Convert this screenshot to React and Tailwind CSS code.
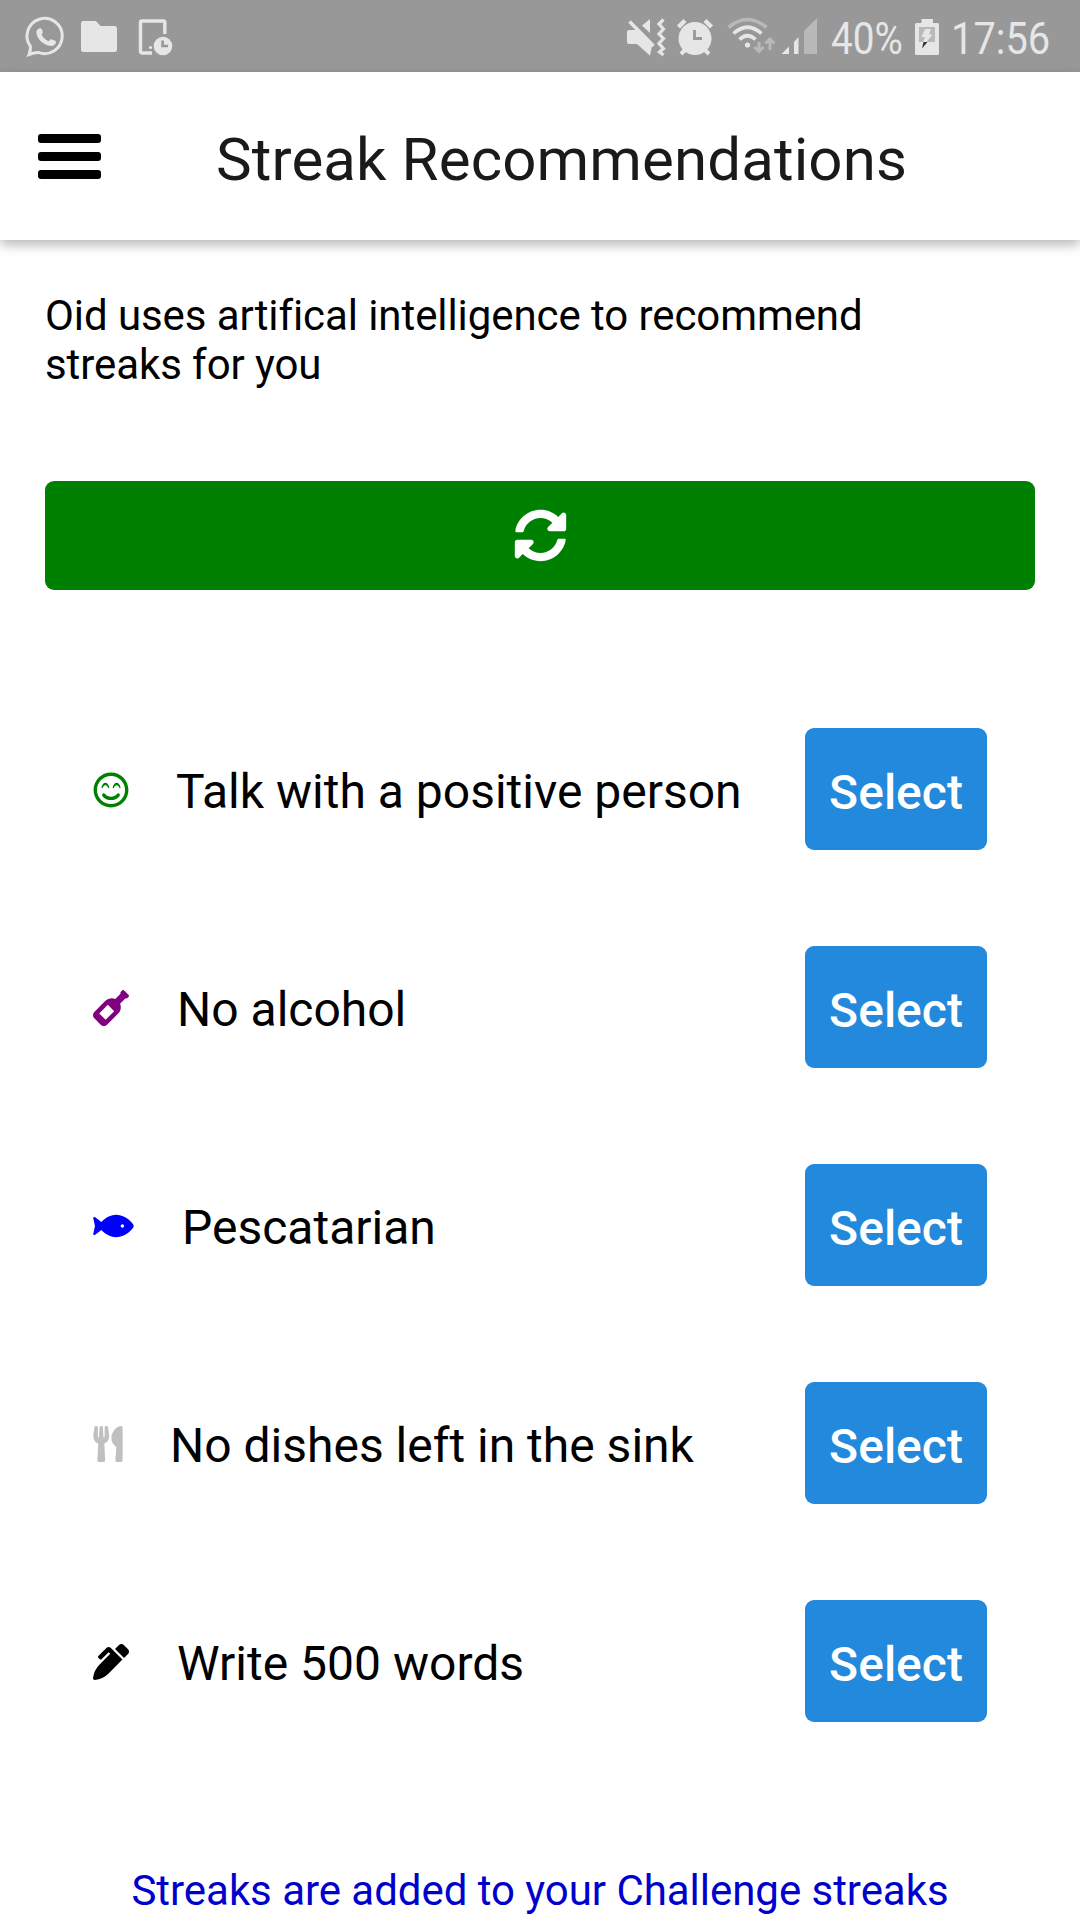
import React from "react";
import { FaSyncAlt, FaRegSmileBeam, FaWineBottle, FaFish, FaUtensils, FaPenAlt } from "react-icons/fa";

const streaks = [
  { label: "Talk with a positive person", Icon: FaRegSmileBeam, look: "w-9 mr-[47px] text-[#008000]" },
  { label: "No alcohol", Icon: FaWineBottle, look: "w-9 mr-[48px] text-[#800080]" },
  { label: "Pescatarian", Icon: FaFish, look: "w-[41px] mr-[48px] text-[#0000ff]" },
  { label: "No dishes left in the sink", Icon: FaUtensils, look: "w-[30px] mr-[47px] text-[#c0c0c0]" },
  { label: "Write 500 words", Icon: FaPenAlt, look: "w-9 mr-[48px] text-black" },
];

function NotificationIcons() {
  return (
    <svg className="h-[72px] w-[180px]" viewBox="0 0 180 72" fill="#e6e6e6">
      <g transform="translate(1.2 0)">
        <path d="M29.3 46.5A17.6 17.6 0 1 1 37 52.4Q33 52.500 27.8 54.5Q29.500 50 29.300 46.500Z" fill="none" stroke="#e6e6e6" strokeWidth="3" />
        <path d="M38.5 28.2C36 28.6 34.8 31 35.3 33.8C36.4 39.4 42.5 45.4 49.5 46.1C52.2 46.3 54.4 45 54.8 42.3C54.9 41.2 54.2 40.7 53 40.2L50.4 39.4C49.2 39 48.7 39.7 47.6 41.3C45 40.7 41.4 37.2 40.3 34.6C41.4 33.3 41.9 32.6 41.5 31.6L40.5 29C40.2 28.2 39.5 28 38.5 28.2Z" />
      </g>
      <path d="M83.5 21H96l4.5 5H114.500a2.500 2.500 0 0 1 2.500 2.500V49.500a2.500 2.500 0 0 1-2.500 2.500H83.500a2.500 2.500 0 0 1-2.500-2.500V23.500a2.500 2.500 0 0 1 2.500-2.500Z" />
      <path d="M164.800 34V22.500a1.500 1.500 0 0 0-1.500-1.500H142a1.500 1.500 0 0 0-1.500 1.500V51.500a1.500 1.500 0 0 0 1.500 1.500H152" fill="none" stroke="#e6e6e6" strokeWidth="3.400" />
      <circle cx="150.500" cy="47.500" r="1.600" />
      <circle cx="163" cy="46" r="9.300" />
      <path d="M162.600 40.500V46H168" fill="none" stroke="#989898" strokeWidth="2.700" />
    </svg>
  );
}

function SystemIcons() {
  return (
    <svg className="h-[72px] w-[200px]" viewBox="620 0 200 72" fill="#e6e6e6">
      <path d="M629 30H635.500L650 46V55.500L638.500 44H629a2 2 0 0 1-2-2V32a2 2 0 0 1 2-2Z" />
      <path d="M635 29L652 46L650 55.500L637 44Z" />
      <path d="M650 19V33L642 25.500Z" />
      <path d="M632 19L657 44" stroke="#989898" strokeWidth="2.500" />
      <path d="M629.500 21.500L653.500 46" stroke="#e6e6e6" strokeWidth="3.500" />
      <path d="M663.500 19.500L659 24L663.500 29L659 34L663.500 38.500L659 43.500L663.500 48.500L659.500 52L663.500 55" fill="none" stroke="#e6e6e6" strokeWidth="3.200" />
      <circle cx="695" cy="38.500" r="16.500" />
      <path d="M678.500 27L685 20.500M711.500 27L705 20.500" stroke="#e6e6e6" strokeWidth="4.500" />
      <path d="M686 49L681 54M704 49L709 54" stroke="#e6e6e6" strokeWidth="4" />
      <path d="M694.500 30V38.500H702" fill="none" stroke="#989898" strokeWidth="2.800" />
      <path d="M728.500 27.500Q747 11.500 766.500 27.500" fill="none" stroke="#b9b9b9" strokeWidth="3.600" />
      <path d="M733.500 33.500Q747.500 21 761.500 33.500M739.500 39.500Q747.500 32 755.500 39.500" fill="none" stroke="#e6e6e6" strokeWidth="3.600" />
      <circle cx="747.500" cy="45" r="2.600" />
      <path d="M759 42V51M754.500 47L759 51.500L763.500 47M770 50V40M765.500 43.500L770 39L774.500 43.500" fill="none" stroke="#b9b9b9" strokeWidth="3" />
      <path d="M781.500 54L789 46.500V54ZM794 42L798.500 37V54H794Z" />
      <path d="M804 31L817 18V54H804Z" fill="#b9b9b9" />
    </svg>
  );
}

function BatteryIcon() {
  return (
    <svg className="h-[72px] w-6" viewBox="915 0 24 72">
      <path d="M921.500 19H933V23H937.500a1.500 1.500 0 0 1 1.500 1.500V53.500a1.500 1.500 0 0 1-1.500 1.500H916.500a1.500 1.500 0 0 1-1.500-1.500V24.500a1.500 1.500 0 0 1 1.500-1.500H921.500Z" fill="#e6e6e6" />
      <path d="M919 27H935V42H919Z" fill="#b9b9b9" />
      <path d="M925 29H931L929 34.500H932.500L926.500 42H923L925 37H921.500Z" fill="#e6e6e6" />
      <path d="M923.500 42H927.500L922 48.500Z" fill="#333333" />
    </svg>
  );
}

export default function App() {
  return (
    <div className="flex h-[1920px] w-[1080px] flex-col overflow-hidden bg-white font-['Roboto',sans-serif] text-black">
      <div className="flex h-[72px] shrink-0 items-center bg-[#989898] text-[45px] leading-[72px] text-[#e6e6e6]">
        <NotificationIcons />
        <div className="ml-auto flex items-center">
          <SystemIcons />
          <span className="ml-[11px] w-[84px] origin-left scale-x-[0.86] pt-[5px] whitespace-nowrap">40%</span>
          <BatteryIcon />
          <span className="ml-[12px] w-[129px] origin-left scale-x-[0.885] pt-[5px] whitespace-nowrap">17:56</span>
        </div>
      </div>

      <header className="flex h-[168px] shrink-0 items-center shadow-[0_5px_11px_rgba(0,0,0,0.28)]">
        <button aria-label="Menu" className="ml-[37.500px] flex w-[63.500px] flex-col gap-[9px]">
          <span className="h-[9px] rounded-[3px] bg-black" />
          <span className="h-[9px] rounded-[3px] bg-black" />
          <span className="h-[9px] rounded-[3px] bg-black" />
        </button>
        <h1 className="ml-[115px] pt-[8px] text-[60px] leading-[70px] tracking-[0.12px] whitespace-nowrap text-[#1a1a1a]">Streak Recommendations</h1>
      </header>

      <main className="flex flex-col px-[45px] pt-[51px]">
        <p className="w-[860px] text-[42px] leading-[49px] tracking-[-0.08px] [font-variant-ligatures:common-ligatures]">Oid uses artifical intelligence to recommend streaks for you</p>
        <button aria-label="Refresh" className="mt-[92px] flex h-[109px] items-center justify-center rounded-[9px] bg-[#008000] text-white">
          <FaSyncAlt className="size-[53px]" />
        </button>
        <ul className="mt-[138px] flex flex-col gap-[96px] pr-12 pl-12">
          {streaks.map(({ label, Icon, look }) => (
            <li key={label} className="flex h-[122px] items-center text-[48px]">
              <Icon className={`mt-px h-9 shrink-0 ${look}`} />
              <span className="pt-[6px] whitespace-nowrap">{label}</span>
              <button className="ml-auto h-[122px] w-[182px] rounded-[9px] bg-[#2289dc] pt-[8px] font-medium text-white">Select</button>
            </li>
          ))}
        </ul>
        <p className="mt-[144px] text-center text-[42px] leading-[49px] tracking-[-0.04px] whitespace-nowrap text-[#0000cd]">Streaks are added to your Challenge streaks</p>
      </main>
    </div>
  );
}
